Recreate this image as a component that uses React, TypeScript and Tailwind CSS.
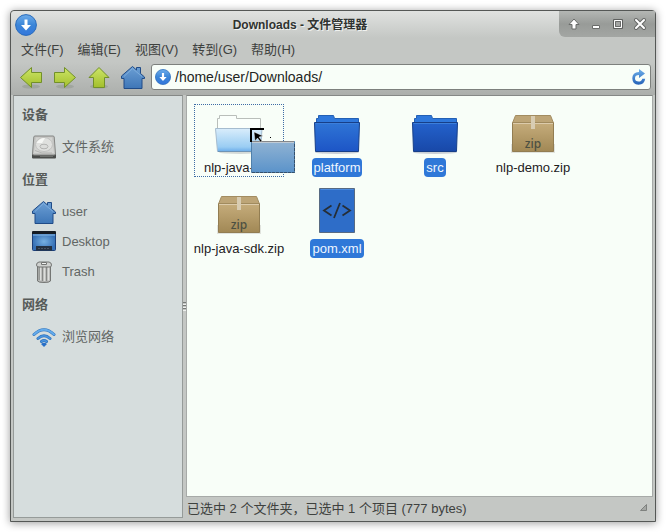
import type { ReactNode } from "react";

function DownloadBadge({ className }: { className: string }) {
  return (
    <svg viewBox="0 0 22 22" className={className} aria-hidden="true">
      <defs>
        <linearGradient id="badge" x2="0" y2="1">
          <stop stopColor="#6dacea" />
          <stop offset="0.5" stopColor="#3b86d8" />
          <stop offset="1" stopColor="#3477dc" />
        </linearGradient>
      </defs>
      <circle cx="11" cy="11" r="10.4" fill="url(#badge)" stroke="#286bbb" strokeWidth="1" />
      <path d="M9.500 5.500h3v5.600h3.500L11 16.600l-5-5.500h3.500z" fill="#fff" />
    </svg>
  );
}

function ArrowIcon({ dir }: { dir: "left" | "right" | "up" }) {
  const paths = {
    left: "M1.500 12.500L12.500 2.500V7.500H22.500V17.500H12.500V22.500z",
    right: "M22.500 12.500L11.500 2.500V7.500H1.500V17.500H11.500V22.500z",
    up: "M12 2.500L22 12.500H17.500V22.500H6.500V12.500H2z",
  };
  return (
    <svg viewBox="0 0 24 24" className="size-6" aria-hidden="true">
      <defs>
        <linearGradient id="green" x2="0" y2="1">
          <stop stopColor="#cce567" />
          <stop offset="1" stopColor="#a3bf2c" />
        </linearGradient>
      </defs>
      <ellipse cx="12" cy="21.500" rx="9" ry="2" fill="#8e968b" opacity="0.5" />
      <path d={paths[dir]} fill="url(#green)" stroke="#72902a" />
    </svg>
  );
}

function HomeIcon() {
  return (
    <svg viewBox="0 0 24 24" className="size-6" aria-hidden="true">
      <defs>
        <linearGradient id="home" x2="0" y2="1">
          <stop stopColor="#6c9fd4" />
          <stop offset="1" stopColor="#3e76b7" />
        </linearGradient>
      </defs>
      <path
        d="M.5 13.500V11L11.500 1.500 15.500 5V2.500H19.500V8.500L23.500 12V13.500H21V23.500H3V13.500z"
        fill="url(#home)"
        stroke="#204b87"
        strokeLinejoin="round"
      />
      <path d="M3 11.500L11.500 3.500L21 11.500" fill="none" stroke="#84b2df" strokeWidth="0.8" />
    </svg>
  );
}

function DiskIcon() {
  return (
    <svg viewBox="0 0 24 24" className="size-6" aria-hidden="true">
      <path d="M0 18H24V22.500Q24 23.500 23 23.500H1Q0 23.500 0 22.500z" fill="#4a4c4a" />
      <path d="M3 1H21Q22 1 22.200 2L23.500 18.500Q23.500 20 22 20H2Q.5 20 .5 18.500L1.800 2Q2 1 3 1z" fill="#c4c5c3" stroke="#858684" />
      <path d="M4 2.500H20L22 18H2z" fill="#d3d4d2" />
      <ellipse cx="12" cy="9.500" rx="8.500" ry="7" fill="#dfe0de" stroke="#c0c1bf" />
      <path d="M4.500 8Q8 2.500 13 3L10 8z" fill="#f6f7f5" />
      <ellipse cx="12" cy="11.500" rx="4" ry="2.300" fill="#dcdddb" stroke="#a9aaa8" strokeWidth="0.8" />
      <path d="M3 15.500l7 2.500h10" fill="none" stroke="#b3b4b2" />
      <path d="M8 21.500h13" stroke="#6d706d" />
    </svg>
  );
}

function DesktopIcon() {
  return (
    <svg viewBox="0 0 24 24" className="size-6" aria-hidden="true">
      <defs>
        <radialGradient id="screen">
          <stop stopColor="#76b0e0" />
          <stop offset="1" stopColor="#3670b5" />
        </radialGradient>
      </defs>
      <rect x="0.5" y="2.500" width="23" height="18" rx="1" fill="url(#screen)" stroke="#1c3f78" />
      <path d="M0 2Q0 1 1 1H23Q24 1 24 2V4H0z" fill="#151b23" />
      <path d="M1 5H23" stroke="#8abbe5" />
      <path d="M4 16H20V20.500H4z" fill="#24303f" />
      <path d="M6 18.500H18" stroke="#4a5664" strokeDasharray="2 1" />
    </svg>
  );
}

function TrashIcon() {
  return (
    <svg viewBox="0 0 24 24" className="size-6" aria-hidden="true">
      <path d="M5.500 6H18.500L18.500 21Q17.500 22.500 12 22.500T5.500 21z" fill="#b4b5b3" stroke="#747674" />
      <path d="M8.500 7V20.500M12.500 7V21M16.500 7V20.500" stroke="#dcdedc" strokeWidth="1.500" />
      <path d="M7.200 7V20M10.500 7V21M14.500 7V21" stroke="#868886" />
      <path d="M4.500 5Q4.500 2.500 7 2H17Q19.500 2.500 19.500 5T17 7H7Q4.500 7 4.500 5z" fill="#cfd1cf" stroke="#737573" />
      <path d="M9.500 4.500V2.500H14.500V4.500z" fill="#f0f1f0" stroke="#737573" />
    </svg>
  );
}

function WifiIcon() {
  return (
    <svg viewBox="0 0 24 24" className="size-6" aria-hidden="true">
      <g fill="none" strokeLinecap="round">
        <path d="M2 9.500Q12 0 22 9.500M6 13.500Q12 8 18 13.500M9.500 16.500Q12 14.500 14.500 16.500" stroke="#2f74bf" strokeWidth="3" />
        <path d="M2 9.500Q12 0 22 9.500" stroke="#65acec" strokeWidth="1.800" />
        <path d="M6 13.500Q12 8 18 13.500M9.500 16.500Q12 14.500 14.500 16.500" stroke="#4a94df" strokeWidth="1.600" />
      </g>
      <path d="M9 19Q12 16.500 15 19L12 22z" fill="#276fc7" />
    </svg>
  );
}

function ReloadIcon() {
  return (
    <svg viewBox="0 0 16 16" className="size-4" aria-hidden="true">
      <defs>
        <linearGradient id="reload" x2="0" y2="1">
          <stop stopColor="#6eb0ea" />
          <stop offset="1" stopColor="#2462b8" />
        </linearGradient>
      </defs>
      <path
        d="M8 0l6 4.500L8 9V6Q4 6 4 9.300T7.700 12.600Q10.600 12.600 11.300 9.800H14.200Q13.500 15.700 7.500 15.700T1.300 9.200Q1.300 3.500 8 3z"
        fill="url(#reload)"
      />
    </svg>
  );
}

function FolderIcon({ shade }: { shade: "bright" | "deep" }) {
  return (
    <svg viewBox="0 0 48 48" className="size-12" aria-hidden="true">
      <defs>
        <linearGradient id="folder-bright" x2="0" y2="1">
          <stop stopColor="#2f75d6" />
          <stop offset="1" stopColor="#1d55c6" />
        </linearGradient>
        <linearGradient id="folder-deep" x2="0" y2="1">
          <stop stopColor="#2462cc" />
          <stop offset="1" stopColor="#1848a8" />
        </linearGradient>
      </defs>
      <ellipse cx="24" cy="45.500" rx="22" ry="1.500" fill="#c9cfd6" />
      <path d="M3.500 17V11.500H5.500V8.500H20.500L21.500 11.500H45.500V17z" fill="#2f78dc" stroke="#2460b4" />
      <path
        d="M1.500 15.500H46.500L45.500 44.500H2.500z"
        fill={shade === "bright" ? "url(#folder-bright)" : "url(#folder-deep)"}
        stroke="#173f88"
      />
      <path d="M2.500 16.500H45.500" stroke="#3c7fdb" />
    </svg>
  );
}

function OpenFolderIcon() {
  return (
    <svg viewBox="0 0 48 48" className="size-12" aria-hidden="true">
      <defs>
        <linearGradient id="folder-open" x2="0" y2="1">
          <stop stopColor="#d9edfb" />
          <stop offset="0.8" stopColor="#9acdf3" />
          <stop offset="1" stopColor="#6aacea" />
        </linearGradient>
      </defs>
      <ellipse cx="25" cy="45.500" rx="21" ry="1.500" fill="#d4dad7" />
      <path d="M2.500 24V11.500H4.500V8.500H21.500V11.500H45.500V24" fill="#fafffb" stroke="#b9beba" />
      <path d="M.5 21.500H47L45.500 44.500H2.500z" fill="url(#folder-open)" stroke="#a5bccf" />
      <path d="M3 44.500H45" stroke="#6e93b5" />
    </svg>
  );
}

function ZipIcon() {
  return (
    <svg viewBox="0 0 48 48" className="size-12" aria-hidden="true">
      <defs>
        <linearGradient id="box" x2="0" y2="1">
          <stop stopColor="#c5ac7b" />
          <stop offset="1" stopColor="#a18855" />
        </linearGradient>
      </defs>
      <path d="M2 37H46V46H2z" fill="#e0e3dd" />
      <path d="M6.500 8.500H41.500L44.500 16H3.500z" fill="#bda577" stroke="#a28c61" />
      <path d="M3.500 16H44.500V44.500H3.500z" fill="url(#box)" stroke="#927d52" />
      <path d="M4 16.500H44" stroke="#dccbab" />
      <path d="M22 9H26V22H22z" fill="#d8ccb2" />
      <text
        x="24"
        y="41"
        textAnchor="middle"
        className="fill-[#4c5042] font-['Noto_Sans',sans-serif] text-[12px] font-medium"
      >
        zip
      </text>
    </svg>
  );
}

function XmlIcon() {
  return (
    <svg viewBox="0 0 48 48" className="size-12" aria-hidden="true">
      <path d="M6.500 .5H41.500V44.500H6.500z" fill="#2e6dc8" stroke="#576a83" />
      <path d="M7.500 1.500H40.500" stroke="#4a8ae0" />
      <path d="M18.500 17.500L11 22.500L18.500 27.500M29.500 17.500L37 22.500L29.500 27.500M27 15L21 30" fill="none" stroke="#262e36" strokeWidth="1.800" />
    </svg>
  );
}

function DragGhost() {
  return (
    <svg viewBox="0 0 48 46" className="pointer-events-none absolute top-6 left-14 z-10 h-[46px] w-12" aria-hidden="true">
      <defs>
        <linearGradient id="ghost" x2="0" y2="1">
          <stop stopColor="#90b3d3" />
          <stop offset="1" stopColor="#5b93ca" />
        </linearGradient>
      </defs>
      <path d="M1.500 13.500H44.500V44.500H1.500z" fill="url(#ghost)" stroke="#5080ab" />
      <path d="M1 13.500H44" stroke="#87888a" />
      <path d="M2 14.500H44" stroke="#c0cbd5" />
      <path d="M2 44.500H44.500V16" fill="none" stroke="#35506c" strokeDasharray="3 1" />
      <path d="M0 0H14V2H2V14H0z" fill="#000" />
      <path d="M4 4L13 8 9 9 12 13 10.500 14 7.500 10 5 13z" fill="#000" stroke="#fff" strokeWidth="0.4" />
      <path d="M20 9h1v1h-1z" fill="#000" />
    </svg>
  );
}

const menus = ["文件(F)", "编辑(E)", "视图(V)", "转到(G)", "帮助(H)"];

const navButtons: { label: string; icon: ReactNode }[] = [
  { label: "后退", icon: <ArrowIcon dir="left" /> },
  { label: "前进", icon: <ArrowIcon dir="right" /> },
  { label: "上级", icon: <ArrowIcon dir="up" /> },
  { label: "主目录", icon: <HomeIcon /> },
];

const windowButtons: { label: string; shape: ReactNode }[] = [
  { label: "卷起", shape: <path d="M7 2L12 7.500H9V12H5V7.500H2z" fill="#fff" stroke="#6a6c6a" /> },
  { label: "最小化", shape: <path d="M3.500 8.500H10.500V11.500H3.500z" fill="#fff" stroke="#6a6c6a" /> },
  {
    label: "最大化",
    shape: (
      <>
        <path d="M2.500 2.500H11.500V11.500H2.500z" fill="#a3a5a3" stroke="#5e605e" />
        <path d="M3.500 3.500H10.500V10.500H3.500z" fill="none" stroke="#fff" />
        <path d="M4.500 4.500H9.500V9.500H4.500z" fill="none" stroke="#6a6c6a" />
      </>
    ),
  },
  {
    label: "关闭",
    shape: (
      <>
        <path d="M3 3L11 11M11 3L3 11" stroke="#666866" strokeWidth="4" strokeLinecap="round" />
        <path d="M3 3L11 11M11 3L3 11" stroke="#fff" strokeWidth="2" strokeLinecap="round" />
      </>
    ),
  },
];

const places: { title: string; items: { name: string; icon: ReactNode }[] }[] = [
  { title: "设备", items: [{ name: "文件系统", icon: <DiskIcon /> }] },
  {
    title: "位置",
    items: [
      { name: "user", icon: <HomeIcon /> },
      { name: "Desktop", icon: <DesktopIcon /> },
      { name: "Trash", icon: <TrashIcon /> },
    ],
  },
  { title: "网络", items: [{ name: "浏览网络", icon: <WifiIcon /> }] },
];

const files: { name: string; icon: ReactNode; selected?: boolean; dropTarget?: boolean }[] = [
  { name: "nlp-java-sdk", icon: <OpenFolderIcon />, dropTarget: true },
  { name: "platform", icon: <FolderIcon shade="bright" />, selected: true },
  { name: "src", icon: <FolderIcon shade="deep" />, selected: true },
  { name: "nlp-demo.zip", icon: <ZipIcon /> },
  { name: "nlp-java-sdk.zip", icon: <ZipIcon /> },
  { name: "pom.xml", icon: <XmlIcon />, selected: true },
];

export default function App() {
  return (
    <div className="flex min-h-screen bg-white p-2.5 font-['Liberation_Sans','Noto_Sans_CJK_SC',sans-serif] text-[13px] leading-5 text-[#3e413e]">
      <div className="flex min-w-0 flex-1 flex-col rounded-t border border-[#555856] bg-[#c4c7c4] shadow-[0_1px_9px_rgba(0,0,0,0.4)]">
        <header className="flex h-[27px] items-start rounded-t bg-linear-to-b from-[#e0e2e0] to-[#c4c7c4]">
          <DownloadBadge className="ml-1 mt-[3px] size-[22px]" />
          <h1 className="flex-1 pl-1 text-center text-[12px] leading-7 font-bold text-[#303330] [text-shadow:1px_1px_0_#f0f2f0]">
            Downloads - 文件管理器
          </h1>
          <div className="flex h-[26px] items-center rounded-bl-md bg-linear-to-b from-[#b4b7b4] via-[#989b98] to-[#a3a6a3] px-1">
            {windowButtons.map((b) => (
              <button key={b.label} type="button" aria-label={b.label} className="flex w-[22px] justify-center">
                <svg viewBox="0 0 14 14" className="size-3.5" aria-hidden="true">
                  {b.shape}
                </svg>
              </button>
            ))}
          </div>
        </header>

        <nav className="flex h-6 items-center gap-3.5 px-2.5">
          {menus.map((m) => (
            <button key={m} type="button">
              {m}
            </button>
          ))}
        </nav>

        <div className="flex h-[33px] items-center bg-linear-to-b from-[#c4c7c4] to-[#acafac] pr-1 pb-[3px] pl-[3px]">
          {navButtons.map((b) => (
            <button key={b.label} type="button" aria-label={b.label} className="flex w-[34px] shrink-0 justify-center">
              {b.icon}
            </button>
          ))}
          <div className="ml-px flex h-[26px] min-w-0 flex-1 items-center rounded-[3px] border border-[#7d807d] bg-[#f8fef8] px-[3px]">
            <DownloadBadge className="size-4 shrink-0" />
            <input
              aria-label="路径"
              defaultValue="/home/user/Downloads/"
              className="min-w-0 flex-1 bg-transparent px-1 text-[14px] text-[#222522] outline-none"
            />
            <button type="button" aria-label="重新载入">
              <ReloadIcon />
            </button>
          </div>
        </div>

        <div className="flex flex-1 px-0.5 pb-[3px]">
          <aside className="w-[170px] shrink-0 space-y-[3px] border border-[#969b99] border-t-[#858886] bg-[#d6dddd] px-2 pt-1 text-[#626664]">
            {places.map((group) => (
              <section key={group.title}>
                <h2 className="mb-0.5 leading-[30px] font-bold text-[#575b59]">{group.title}</h2>
                <ul>
                  {group.items.map((item) => (
                    <li key={item.name}>
                      <button type="button" className="flex h-[30px] w-full items-center gap-1.5 px-2.5 text-left">
                        {item.icon}
                        {item.name}
                      </button>
                    </li>
                  ))}
                </ul>
              </section>
            ))}
          </aside>

          <div className="flex w-[3px] shrink-0 flex-col items-center justify-center">
            {[0, 1, 2].map((n) => (
              <span key={n} className="h-[3px] w-[3px] border-t border-b border-t-[#777a78] border-b-[#eef0ee]" />
            ))}
          </div>

          <div className="flex min-w-0 flex-1 flex-col">
            <main className="flex-1 border border-[#a7aaa8] border-t-[#858886] bg-[#f8fef8] pt-2 pl-[7px]">
              <ul className="grid grid-cols-[repeat(auto-fill,90px)] gap-2">
                {files.map((file) => (
                  <li
                    key={file.name}
                    className={
                      file.dropTarget
                        ? "relative h-[73px] outline outline-dotted -outline-offset-1 outline-[#3d6ca5]"
                        : "h-[73px]"
                    }
                  >
                    <button type="button" className="flex w-full flex-col items-center pt-[3px]">
                      {file.icon}
                      <span
                        className={
                          file.selected
                            ? "mt-[3px] rounded bg-[#2f78d8] px-0.5 leading-[19px] text-[#eef6ff]"
                            : "mt-[3px] leading-[19px] whitespace-nowrap text-[#1d201d]"
                        }
                      >
                        {file.name}
                      </span>
                    </button>
                    {file.dropTarget && <DragGhost />}
                  </li>
                ))}
              </ul>
            </main>
            <footer className="flex h-[21px] items-center justify-between pr-1.5 pl-px">
              <span className="pt-0.5">已选中 2 个文件夹，已选中 1 个项目 (777 bytes)</span>
              <svg viewBox="0 0 7 7" className="size-[7px]" aria-hidden="true">
                <path d="M6.500 .5V6.500H.5z" fill="#a4a7a4" stroke="#7e817e" />
              </svg>
            </footer>
          </div>
        </div>
      </div>
    </div>
  );
}
